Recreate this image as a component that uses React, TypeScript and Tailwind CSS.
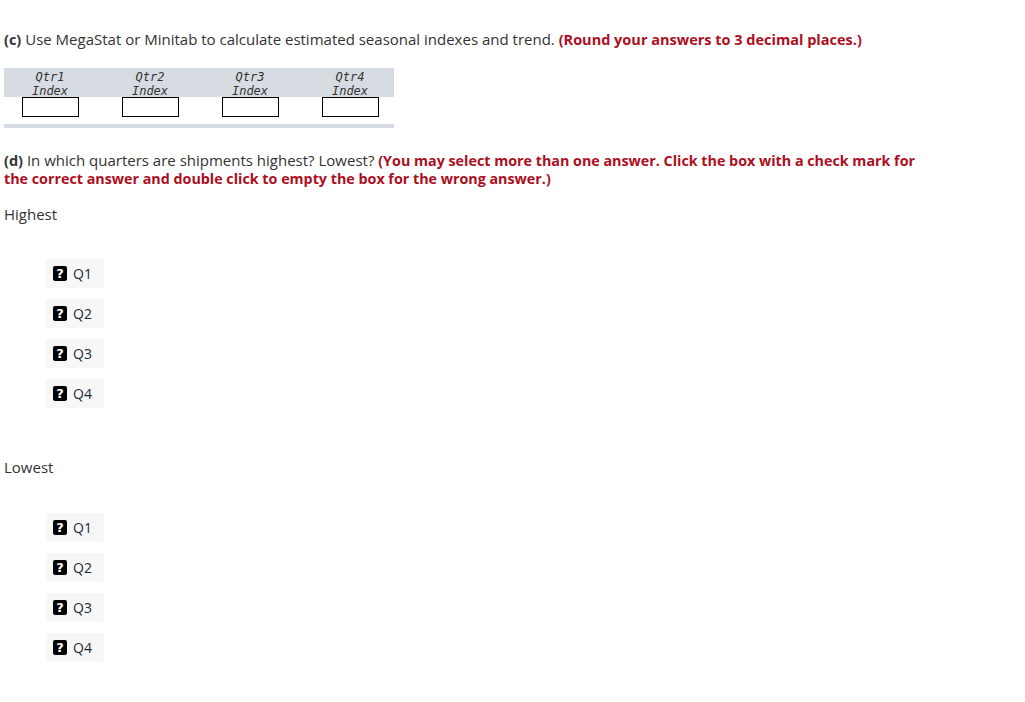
import React from "react";

const quarters = ["Q1", "Q2", "Q3", "Q4"];

const Choice = ({ label }: { label: string }) => {
  return (
    <div className="flex items-center h-[29px] w-fit pl-[7px] pr-[12px] bg-[#f7f7f7] rounded-[3px]">
      <span className="flex items-center justify-center w-[14px] h-[15px] bg-black rounded-[2px] text-white text-[13px] font-extrabold leading-none font-['DejaVu_Sans',sans-serif]">
        ?
      </span>
      <span className="ml-[6px] text-[14px] text-[#1e2a3a]">{label}</span>
    </div>
  );
};

const ChoiceList = () => (
  <div className="ml-[42px] flex flex-col gap-[11px]">
    {quarters.map((q) => (
      <Choice key={q} label={q} />
    ))}
  </div>
);

export default function App() {
  return (
    <div
      className="min-h-[702px] bg-white px-1 pt-[30px] text-[#333]"
      style={{ fontFamily: "'Open Sans', Lato, sans-serif" }}
    >
      <p className="text-[15px] leading-[19px]">
        <b className="text-[14.5px]">(c)</b> Use MegaStat or Minitab to calculate estimated seasonal indexes and
        trend. <b className="text-[#ad0f22] text-[14.5px]">(Round your answers to 3 decimal places.)</b>
      </p>

      <div className="mt-[19px] w-[390px]">
        <div className="bg-[#d7dbe2] h-[29px]">
          <div className="-ml-1 grid grid-cols-[100px_100px_100px_100px] font-['DejaVu_Sans_Mono',monospace] italic text-[12px] leading-[14px] text-[#333] text-center pt-[2px]">
            {[1, 2, 3, 4].map((n) => (
              <div key={n}>
                Qtr{n}
                <br />
                Index
              </div>
            ))}
          </div>
        </div>
        <div className="-ml-1 grid grid-cols-[100px_100px_100px_100px] h-[27px]">
          {[1, 2, 3, 4].map((n) => (
            <div key={n} className="flex justify-center">
              <input className="w-[57px] h-[20px] border border-black bg-white outline-none" />
            </div>
          ))}
        </div>
        <div className="h-[4px] bg-[#d7dbe2]" />
      </div>

      <p className="mt-[24px] text-[15px] leading-[17.5px] max-w-[925px]">
        <b className="text-[14.5px] leading-[17.5px]">(d)</b> In which quarters are shipments highest? Lowest?{" "}
        <b className="text-[#ad0f22] text-[14.3px] leading-[17.5px]">
          (You may select more than one answer. Click the box with a check mark for the correct answer
          and double click to empty the box for the wrong answer.)
        </b>
      </p>

      <p className="mt-[18px] text-[15px] leading-[18px]">Highest</p>
      <div className="mt-[36px]">
        <ChoiceList />
      </div>

      <p className="mt-[50px] text-[15px] leading-[18px]">Lowest</p>
      <div className="mt-[37px]">
        <ChoiceList />
      </div>
    </div>
  );
}
